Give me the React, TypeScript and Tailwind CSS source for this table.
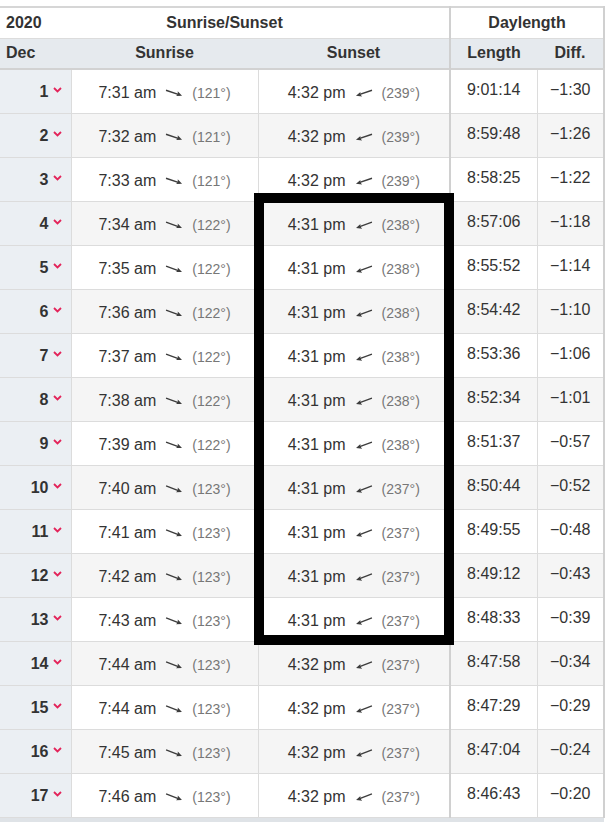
type Row = {
  day: number;
  rise: string;
  riseAz: number;
  set: string;
  setAz: number;
  length: string;
  diff: string;
};

const rows: Row[] = [
  { day: 1, rise: "7:31 am", riseAz: 121, set: "4:32 pm", setAz: 239, length: "9:01:14", diff: "−1:30" },
  { day: 2, rise: "7:32 am", riseAz: 121, set: "4:32 pm", setAz: 239, length: "8:59:48", diff: "−1:26" },
  { day: 3, rise: "7:33 am", riseAz: 121, set: "4:32 pm", setAz: 239, length: "8:58:25", diff: "−1:22" },
  { day: 4, rise: "7:34 am", riseAz: 122, set: "4:31 pm", setAz: 238, length: "8:57:06", diff: "−1:18" },
  { day: 5, rise: "7:35 am", riseAz: 122, set: "4:31 pm", setAz: 238, length: "8:55:52", diff: "−1:14" },
  { day: 6, rise: "7:36 am", riseAz: 122, set: "4:31 pm", setAz: 238, length: "8:54:42", diff: "−1:10" },
  { day: 7, rise: "7:37 am", riseAz: 122, set: "4:31 pm", setAz: 238, length: "8:53:36", diff: "−1:06" },
  { day: 8, rise: "7:38 am", riseAz: 122, set: "4:31 pm", setAz: 238, length: "8:52:34", diff: "−1:01" },
  { day: 9, rise: "7:39 am", riseAz: 122, set: "4:31 pm", setAz: 238, length: "8:51:37", diff: "−0:57" },
  { day: 10, rise: "7:40 am", riseAz: 123, set: "4:31 pm", setAz: 237, length: "8:50:44", diff: "−0:52" },
  { day: 11, rise: "7:41 am", riseAz: 123, set: "4:31 pm", setAz: 237, length: "8:49:55", diff: "−0:48" },
  { day: 12, rise: "7:42 am", riseAz: 123, set: "4:31 pm", setAz: 237, length: "8:49:12", diff: "−0:43" },
  { day: 13, rise: "7:43 am", riseAz: 123, set: "4:31 pm", setAz: 237, length: "8:48:33", diff: "−0:39" },
  { day: 14, rise: "7:44 am", riseAz: 123, set: "4:32 pm", setAz: 237, length: "8:47:58", diff: "−0:34" },
  { day: 15, rise: "7:44 am", riseAz: 123, set: "4:32 pm", setAz: 237, length: "8:47:29", diff: "−0:29" },
  { day: 16, rise: "7:45 am", riseAz: 123, set: "4:32 pm", setAz: 237, length: "8:47:04", diff: "−0:24" },
  { day: 17, rise: "7:46 am", riseAz: 123, set: "4:32 pm", setAz: 237, length: "8:46:43", diff: "−0:20" },
];

// arrow points along the azimuth (0 = north, clockwise), flattened a bit like the source site
function AzArrow({ az }: { az: number }) {
  return (
    <svg
      width="18"
      height="18"
      viewBox="0 0 18 18"
      className="shrink-0"
      style={{ transform: `rotate(${az - 90 + 12 * Math.sign(az - 180)}deg)` }}
    >
      <line x1="0.5" y1="9" x2="15" y2="9" stroke="#3d3d3d" strokeWidth="1.4" />
      <polygon points="17.5,9 12,6.2 13,9 12,11.2" fill="#3d3d3d" />
    </svg>
  );
}

function Chevron() {
  return (
    <svg width="9" height="6" viewBox="0 0 9 6" className="mb-[3px]">
      <polyline points="1,1 4.5,4.5 8,1" fill="none" stroke="#e3245a" strokeWidth="1.8" />
    </svg>
  );
}

function TimeCell({ time, az }: { time: string; az: number }) {
  return (
    <div className="flex items-center justify-center pt-[3px]">
      <span className="text-[16px] text-[#333]">{time}</span>
      <span className="mx-[9px] flex">
        <AzArrow az={az} />
      </span>
      <span className="text-[14px] text-[#777] pt-[2px]">({az}°)</span>
    </div>
  );
}

function App() {
  return (
    <div className="min-h-screen bg-white pt-[6px] font-['Liberation_Sans',Arial,sans-serif] overflow-hidden">
      <div className="relative w-[604px]">
        <table className="w-[604px] table-fixed border-collapse">
          <colgroup>
            <col className="w-[71px]" />
            <col className="w-[187px]" />
            <col className="w-[192px]" />
            <col className="w-[87px]" />
            <col className="w-[67px]" />
          </colgroup>
          <thead>
            <tr className="h-[31px] bg-white border-t-2 border-t-[#d6d6d6] border-r-2 border-r-[#d0d0d0]">
              <th className="text-left pl-[6px] text-[16px] font-bold text-[#333]">2020</th>
              <th colSpan={2} className="text-[16px] font-bold text-[#333] pr-[71px]">
                Sunrise/Sunset
              </th>
              <th colSpan={2} className="text-[16px] font-bold text-[#333] border-l-2 border-l-[#d0d0d0]">
                Daylength
              </th>
            </tr>
            <tr className="h-[31px] bg-[#e6eaee] border-t border-t-[#dcdcdc] border-b-2 border-b-[#d2d2d2] border-r-2 border-r-[#d0d0d0]">
              <th className="text-left pl-[6px] text-[16px] font-bold text-[#333]">Dec</th>
              <th className="text-[16px] font-bold text-[#333]">Sunrise</th>
              <th className="text-[16px] font-bold text-[#333]">Sunset</th>
              <th className="text-[16px] font-bold text-[#333] border-l-2 border-l-[#d0d0d0]">Length</th>
              <th className="text-[16px] font-bold text-[#333]">Diff.</th>
            </tr>
          </thead>
          <tbody>
            {rows.map((r) => (
              <tr
                key={r.day}
                className={
                  r.day % 2 === 1
                    ? "h-[44px] bg-white border-b border-b-[#dcdcdc] border-r-2 border-r-[#d0d0d0]"
                    : "h-[44px] bg-[#f5f5f5] border-b border-b-[#dcdcdc] border-r-2 border-r-[#d0d0d0]"
                }
              >
                <td className="bg-[#ebeff3] border-r border-r-[#dcdcdc] pr-[9px]">
                  <div className="flex items-center justify-end gap-[4px] pt-[1px]">
                    <span className="text-[16px] font-bold text-[#333]">{r.day}</span>
                    <Chevron />
                  </div>
                </td>
                <td className="border-r border-r-[#dcdcdc]">
                  <TimeCell time={r.rise} az={r.riseAz} />
                </td>
                <td>
                  <TimeCell time={r.set} az={r.setAz} />
                </td>
                <td className="text-center text-[16px] text-[#333] border-l-2 border-l-[#d0d0d0] border-r border-r-[#dcdcdc] pb-[2px]">
                  {r.length}
                </td>
                <td className="text-center text-[16px] text-[#333] pb-[2px]">{r.diff}</td>
              </tr>
            ))}
            <tr className="h-[30px] bg-[#dfe3e7]">
              <td colSpan={5} className="pl-[6px] pt-[3px] align-top text-[13px] leading-[16px] text-[#333] whitespace-nowrap">
                * All times are local time for Copenhagen. Time is adjusted for DST when applicable.
              </td>
            </tr>
          </tbody>
        </table>
        {/* highlight annotation drawn over the sunset column */}
        <div className="absolute left-[254px] top-[187px] w-[200px] h-[452px] border-[10px] border-black pointer-events-none" />
      </div>
    </div>
  );
}

export default App;
